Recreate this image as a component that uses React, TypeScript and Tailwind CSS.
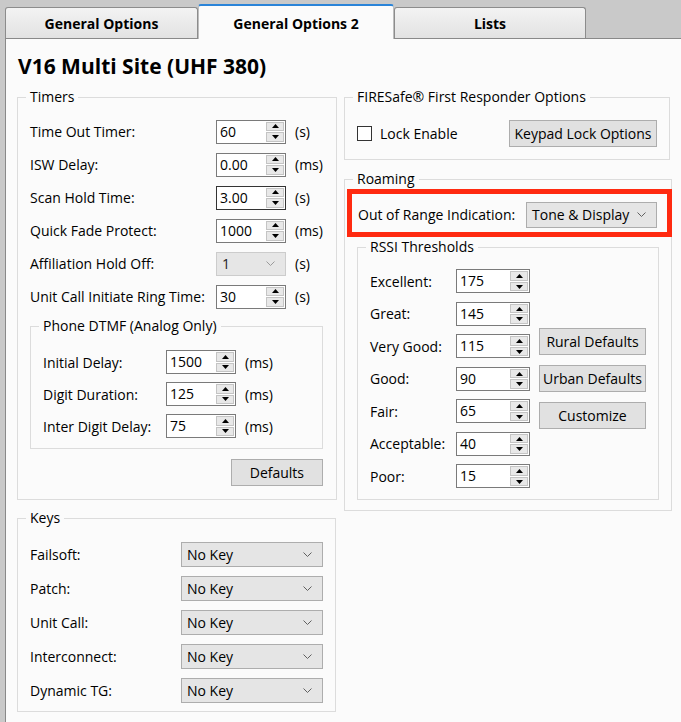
import clsx from "clsx";
import type { ReactNode } from "react";

function Group({ title, className, children }: { title: string; className?: string; children: ReactNode }) {
  return (
    <fieldset className={clsx("border border-[#dcdcdc] px-[12px]", className)}>
      <legend className="ml-[-4px] px-[4px] leading-[20px]">{title}</legend>
      {children}
    </fieldset>
  );
}

function Arrow({ up }: { up?: boolean }) {
  return (
    <svg width="7" height="4" viewBox="0 0 7 4" className="block">
      <polygon points={up ? "0,4 3.5,0 7,4" : "0,0 7,0 3.5,4"} fill="#000" />
    </svg>
  );
}

function Spin({ value, className, focused }: { value: string; className: string; focused?: boolean }) {
  return (
    <div
      className={clsx(
        "flex h-[24px] shrink-0 border bg-white",
        focused ? "border-[#333333]" : "border-[#7a7a7a]",
        className,
      )}
    >
      <div className="flex flex-1 items-center pl-[3px] leading-none">{value}</div>
      <div className="flex w-[19px] flex-col gap-px py-px pr-px">
        <div className="flex flex-1 items-center justify-center border border-[#c4c4c4] bg-[#e8e8e8]">
          <Arrow up />
        </div>
        <div className="flex flex-1 items-center justify-center border border-[#c4c4c4] bg-[#e8e8e8]">
          <Arrow />
        </div>
      </div>
    </div>
  );
}

function Chevron({ light }: { light?: boolean }) {
  return (
    <svg width="9" height="5" viewBox="0 0 9 5" className="block">
      <polyline points="0.5,0.5 4.5,4.5 8.5,0.5" fill="none" stroke={light ? "#9a9a9a" : "#606060"} strokeWidth="1" />
    </svg>
  );
}

function Select({ value, className, disabled }: { value: string; className: string; disabled?: boolean }) {
  return (
    <div
      className={clsx(
        "flex shrink-0 items-center justify-between border pl-[5px] pr-[10px]",
        disabled ? "border-[#cccccc] bg-[#e6e6e6] text-[#222]" : "border-[#adadad] bg-[#e5e5e5]",
        className,
      )}
    >
      <span>{value}</span>
      <Chevron light={disabled} />
    </div>
  );
}

function Button({ label, className }: { label: string; className: string }) {
  return (
    <div className={clsx("flex h-[27px] items-center justify-center border border-[#adadad] bg-[#e1e1e1]", className)}>
      {label}
    </div>
  );
}

const timers: [string, ReactNode][] = [
  ["Time Out Timer:", <Spin value="60" className="w-[70px]" />],
  ["ISW Delay:", <Spin value="0.00" className="w-[70px]" />],
  ["Scan Hold Time:", <Spin value="3.00" className="w-[70px]" focused />],
  ["Quick Fade Protect:", <Spin value="1000" className="w-[70px]" />],
  ["Affiliation Hold Off:", <Select value="1" className="h-[24px] w-[70px]" disabled />],
  ["Unit Call Initiate Ring Time:", <Spin value="30" className="w-[70px]" />],
];
const timerUnits = ["(s)", "(ms)", "(s)", "(ms)", "(s)", "(s)"];

const dtmf = [
  ["Initial Delay:", "1500"],
  ["Digit Duration:", "125"],
  ["Inter Digit Delay:", "75"],
];

const keys = ["Failsoft:", "Patch:", "Unit Call:", "Interconnect:", "Dynamic TG:"];

const rssi = [
  ["Excellent:", "175"],
  ["Great:", "145"],
  ["Very Good:", "115"],
  ["Good:", "90"],
  ["Fair:", "65"],
  ["Acceptable:", "40"],
  ["Poor:", "15"],
];

export default function App() {
  return (
    <div className="h-[722px] w-[681px] overflow-hidden bg-[#c9c9c9] font-['Open_Sans',sans-serif] text-[14px] text-black">
      {/* tab strip */}
      <div className="flex h-[38px] items-end pl-[5px] text-[14px] font-bold">
        <div className="flex h-[31px] w-[193px] items-center justify-center rounded-t-[3px] border border-b-0 border-[#8c8c8c] bg-linear-to-b from-[#f3f3f3] to-[#e2e2e2]">
          General Options
        </div>
        <div className="relative z-10 -mb-px flex h-[35px] w-[196px] items-center justify-center rounded-t-[3px] border-x border-t-2 border-x-[#bdbdbd] border-t-[#2a84d8] bg-[#fbfbfb] pt-[1px]">
          General Options 2
        </div>
        <div className="flex h-[31px] w-[192px] items-center justify-center rounded-t-[3px] border border-b-0 border-[#8c8c8c] bg-linear-to-b from-[#f3f3f3] to-[#e2e2e2]">
          Lists
        </div>
      </div>

      {/* panel */}
      <div className="ml-[5px] h-[684px] border-l border-t border-[#898989] bg-[#fbfbfb] pl-[11px] pt-[13px]">
        <h1 className="pl-[1px] text-[21px] font-bold leading-[28px]">V16 Multi Site (UHF 380)</h1>

        <div className="mt-[7px] flex gap-[8px]">
          {/* left column */}
          <div className="flex w-[319px] flex-col gap-[8px]">
            <Group title="Timers" className="pb-[13px] pr-[13px]">
              <div className="pt-[8px]">
                {timers.map(([label, ctrl], i) => (
                  <div key={label} className="flex h-[33px] items-center">
                    <span className="w-[186px] shrink-0">{label}</span>
                    {ctrl}
                    <span className="ml-[9px]">{timerUnits[i]}</span>
                  </div>
                ))}
              </div>
              <Group title="Phone DTMF (Analog Only)" className="mt-[3px] pb-[6px]">
                <div className="pt-[10px]">
                  {dtmf.map(([label, v]) => (
                    <div key={label} className="flex h-[32px] items-center">
                      <span className="w-[123px] shrink-0">{label}</span>
                      <Spin value={v} className="w-[70px]" />
                      <span className="ml-[9px]">(ms)</span>
                    </div>
                  ))}
                </div>
              </Group>
              <div className="mt-[10px] flex justify-end">
                <Button label="Defaults" className="w-[92px]" />
              </div>
            </Group>

            <Group title="Keys" className="pb-[4px] pr-[12px]">
              <div className="pt-[9px]">
                {keys.map((k) => (
                  <div key={k} className="flex h-[34px] items-center">
                    <span className="w-[151px] shrink-0">{k}</span>
                    <Select value="No Key" className="h-[25px] w-[142px]" />
                  </div>
                ))}
              </div>
            </Group>
          </div>

          {/* right column */}
          <div className="flex w-[326px] flex-col gap-[9px]">
            <Group title="FIRESafe® First Responder Options" className="pb-[12px] pr-[12px]">
              <div className="flex items-center justify-between pt-[13px]">
                <div className="flex items-center gap-[8px]">
                  <div className="h-[15px] w-[15px] border border-[#333333] bg-white" />
                  <span>Lock Enable</span>
                </div>
                <Button label="Keypad Lock Options" className="w-[148px]" />
              </div>
            </Group>

            <Group title="Roaming" className="pb-[10px] pr-[12px]">
              <div className="ml-[-10px] mr-[-13px] flex h-[48px] items-center border-[5px] border-[#ff2a10] pl-[6px] pt-[3px]">
                <span className="w-[168px] shrink-0">Out of Range Indication:</span>
                <Select value="Tone & Display" className="h-[26px] w-[131px]" />
              </div>
              <Group title="RSSI Thresholds" className="pb-[6px]">
                <div className="flex pt-[8px]">
                  <div className="flex flex-col">
                    {rssi.map(([label, v]) => (
                      <div key={label} className="flex h-[32.5px] items-center">
                        <span className="w-[86px] shrink-0">{label}</span>
                        <Spin value={v} className="w-[74px]" />
                      </div>
                    ))}
                  </div>
                  <div className="ml-[9px] flex flex-col justify-center gap-[10px]">
                    <Button label="Rural Defaults" className="w-[107px]" />
                    <Button label="Urban Defaults" className="w-[107px]" />
                    <Button label="Customize" className="w-[107px]" />
                  </div>
                </div>
              </Group>
            </Group>
          </div>
        </div>
      </div>
    </div>
  );
}
